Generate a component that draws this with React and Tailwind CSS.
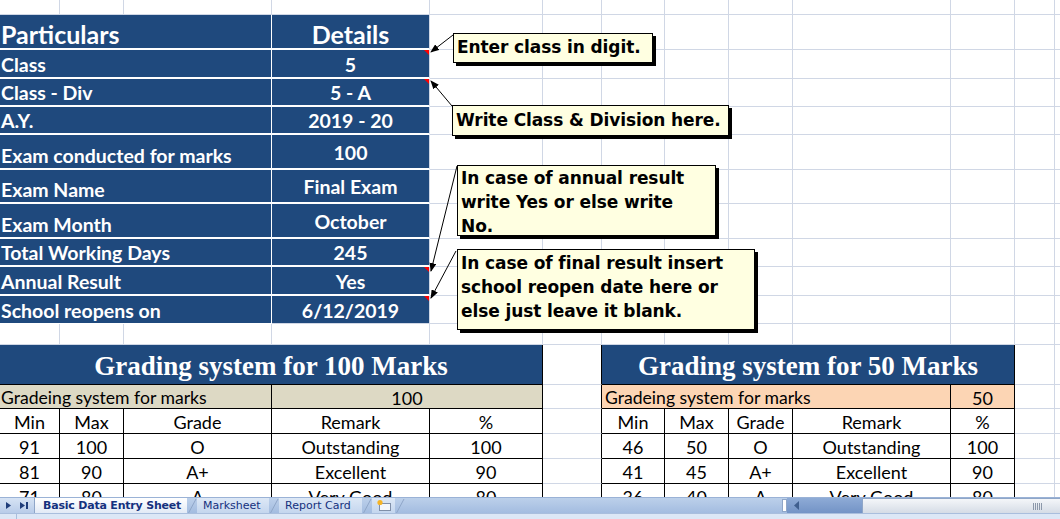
import React from 'react';

const COLS = 'grid-cols-[60px_64px_148px_158px_113px_59px_63px_64px_64px_158px_64px_40px_80px]';
const ROWS =
  'grid-rows-[15px_35px_29px_28px_28px_35px_34px_35px_28px_29px_28px_21px_40px_24px_25px_25px_25px_25px]';

const GRID = 'border-r border-b border-[#D0D7E5]';
const BLK = 'border-r border-b border-black';
const CAL = "font-['Lato',sans-serif]";
const TAH = "font-['DejaVu_Sans',sans-serif]";

const basics = [
  { label: 'Class', value: '5', note: true },
  { label: 'Class - Div', value: '5 - A', note: true },
  { label: 'A.Y.', value: '2019 - 20' },
  { label: 'Exam conducted for marks', value: '100' },
  { label: 'Exam Name', value: 'Final Exam' },
  { label: 'Exam Month', value: 'October' },
  { label: 'Total Working Days', value: '245' },
  { label: 'Annual Result', value: 'Yes', note: true },
  { label: 'School reopens on', value: '6/12/2019', note: true },
];

const grades100 = [
  ['91', '100', 'O', 'Outstanding', '100'],
  ['81', '90', 'A+', 'Excellent', '90'],
  ['71', '80', 'A', 'Very Good', '80'],
];
const grades50 = [
  ['46', '50', 'O', 'Outstanding', '100'],
  ['41', '45', 'A+', 'Excellent', '90'],
  ['36', '40', 'A', 'Very Good', '80'],
];

function blanks(n, key, cls = GRID) {
  return Array.from({ length: n }, (_, i) => <div key={key + i} className={cls} />);
}

function Num({ children }) {
  return (
    <div className={`${BLK} flex items-center justify-center text-[18px] leading-none pt-[2px] text-black`}>
      {children}
    </div>
  );
}

function Note({ className, children }) {
  return (
    <div
      className={`absolute bg-[#FFFFE1] border border-black shadow-[3px_3px_0_#000] ${TAH} font-bold text-[17px] leading-[24px] tracking-[-0.1px] text-black pl-[3px] ${className}`}
    >
      {children}
    </div>
  );
}

function Slash() {
  return (
    <svg width="10" height="16" className="shrink-0">
      <line x1="1" y1="16" x2="9" y2="1" stroke="#8FA6C8" strokeWidth="1" />
    </svg>
  );
}

export default function App() {
  return (
    <div className="w-[1060px] h-[519px] overflow-hidden bg-white flex flex-col">
      {/* sheet */}
      <div className="relative h-[497px] overflow-hidden shrink-0">
        <div className={`grid ${COLS} ${ROWS} ${CAL}`}>
          {blanks(13, 'r1-')}

          {/* basic data header */}
          <div className="col-span-3 bg-[#1F497D] border-r border-b-2 border-white flex items-end pb-[1px] pl-px text-white font-bold text-[25px] leading-none">
            Particulars
          </div>
          <div className="bg-[#1F497D] border-r border-b-2 border-r-[#D0D7E5] border-b-white flex items-end justify-center pb-[1px] text-white font-bold text-[25px] leading-none">
            Details
          </div>
          {blanks(9, 'r2-')}

          {basics.map((row, i) => (
            <React.Fragment key={row.label}>
              <div
                className={`col-span-3 bg-[#1F497D] border-r ${
                  i === basics.length - 1 ? 'border-b' : 'border-b-2'
                } border-white flex items-end pb-[3px] pl-px text-white font-bold text-[19.5px] leading-none`}
              >
                {row.label}
              </div>
              <div
                className={`relative bg-[#1F497D] border-r border-r-[#D0D7E5] ${
                  i === basics.length - 1 ? 'border-b border-b-[#D0D7E5]' : 'border-b-2 border-b-white'
                } flex items-center justify-center pt-[2px] text-white font-bold text-[19.5px] leading-none`}
              >
                {row.value}
                {row.note && (
                  <span className="absolute top-0 right-0 w-0 h-0 border-t-[5px] border-l-[5px] border-t-[#FF0000] border-l-transparent" />
                )}
              </div>
              {blanks(9, `b${i}-`)}
            </React.Fragment>
          ))}

          {blanks(13, 'r12-')}

          {/* grading headers */}
          <div className={`col-span-5 ${BLK} bg-[#1F497D] flex items-center justify-center pt-[3px] text-white font-bold text-[27px] leading-none font-['Liberation_Serif',serif]`}>
            Grading system for 100 Marks
          </div>
          <div className="border-r border-r-black border-b border-b-[#D0D7E5]" />
          <div className={`col-span-5 ${BLK} bg-[#1F497D] flex items-center justify-center pt-[3px] text-white font-bold text-[27px] leading-none font-['Liberation_Serif',serif]`}>
            Grading system for 50 Marks
          </div>
          {blanks(2, 'r13-')}

          {/* marks rows */}
          <div className={`col-span-3 ${BLK} bg-[#DDD9C4] flex items-center pl-px text-[17.6px] leading-none pt-[2px]`}>
            Gradeing system for marks
          </div>
          <div className={`col-span-2 ${BLK} bg-[#DDD9C4] flex items-center justify-center text-[18px] leading-none pt-[2px]`}>
            100
          </div>
          <div className="border-r border-r-black border-b border-b-[#D0D7E5]" />
          <div className={`col-span-4 ${BLK} bg-[#FCD5B4] flex items-center pl-[3px] text-[17.6px] leading-none pt-[2px]`}>
            Gradeing system for marks
          </div>
          <div className={`${BLK} bg-[#FCD5B4] flex items-center justify-center text-[18px] leading-none pt-[2px]`}>
            50
          </div>
          {blanks(2, 'r14-')}

          {['Min', 'Max', 'Grade', 'Remark', '%'].map((h) => (
            <Num key={'a' + h}>{h}</Num>
          ))}
          <div className="border-r border-r-black border-b border-b-[#D0D7E5]" />
          {['Min', 'Max', 'Grade', 'Remark', '%'].map((h) => (
            <Num key={'b' + h}>{h}</Num>
          ))}
          {blanks(2, 'r15-')}

          {grades100.map((g, i) => (
            <React.Fragment key={'g' + i}>
              {g.map((v, j) => (
                <Num key={j}>{v}</Num>
              ))}
              <div className="border-r border-r-black border-b border-b-[#D0D7E5]" />
              {grades50[i].map((v, j) => (
                <Num key={'h' + j}>{v}</Num>
              ))}
              {blanks(2, `g${i}-`)}
            </React.Fragment>
          ))}
        </div>

        {/* comment arrows */}
        <svg className="absolute inset-0 pointer-events-none" width="1060" height="497">
          <defs>
            <marker id="ah" markerWidth="9" markerHeight="7" refX="8" refY="3.5" orient="auto" markerUnits="userSpaceOnUse">
              <path d="M0,0 L9,3.5 L0,7 z" fill="#000" />
            </marker>
          </defs>
          <line x1="453" y1="35" x2="431" y2="52" stroke="#000" markerEnd="url(#ah)" />
          <line x1="452" y1="106" x2="431" y2="81" stroke="#000" markerEnd="url(#ah)" />
          <line x1="457" y1="166" x2="431" y2="271" stroke="#000" markerEnd="url(#ah)" />
          <line x1="456" y1="251" x2="431" y2="298" stroke="#000" markerEnd="url(#ah)" />
        </svg>

        <Note className="left-[453px] top-[33px] w-[200px] h-[30px] pt-[1px]">Enter class in digit.</Note>
        <Note className="left-[452px] top-[105px] w-[277px] h-[31px] pt-[2px]">Write Class &amp; Division here.</Note>
        <Note className="left-[457px] top-[165px] w-[259px] h-[71px]">
          In case of annual result
          <br />
          write Yes or else write
          <br />
          No.
        </Note>
        <Note className="left-[457px] top-[249px] w-[298px] h-[81px] pt-px">
          In case of final result insert
          <br />
          school reopen date here or
          <br />
          else just leave it blank.
        </Note>
      </div>

      {/* sheet tabs and scroll bar */}
      <div className={`h-[16px] flex shrink-0 bg-gradient-to-b from-[#BCD0EA] to-[#A3BCE0] border-t border-[#9AB2D6] ${TAH} text-[11px] text-[#15317E]`}>
        <div className="w-[35px] shrink-0 flex items-center gap-[9px] pl-[6px] bg-gradient-to-b from-[#D6E3F4] to-[#B8CCE9] border-r border-[#8FA6C8]">
          <svg width="5" height="7">
            <path d="M0,0 L5,3.5 L0,7 z" fill="#1F3D7A" />
          </svg>
          <svg width="8" height="7">
            <path d="M0,0 L5,3.5 L0,7 z M6,0 H8 V7 H6 z" fill="#1F3D7A" />
          </svg>
        </div>
        <div className="w-[152px] shrink-0 bg-gradient-to-b from-white to-[#E2EAF6] font-bold tracking-[-0.2px] pl-[8px] flex items-center leading-none">
          Basic Data Entry Sheet
        </div>
        <Slash />
        <div className="w-[72px] shrink-0 bg-gradient-to-b from-[#DDE8F6] to-[#C4D6EE] pl-[6px] flex items-center leading-none">
          Marksheet
        </div>
        <Slash />
        <div className="w-[83px] shrink-0 bg-gradient-to-b from-[#DDE8F6] to-[#C4D6EE] pl-[6px] flex items-center leading-none">
          Report Card
        </div>
        <Slash />
        <div className="w-[23px] shrink-0 bg-gradient-to-b from-[#DDE8F6] to-[#C4D6EE] flex items-center justify-center">
          <svg width="16" height="13">
            <rect x="3.5" y="4.5" width="11" height="7" fill="#F4F7FC" stroke="#7F8FA8" />
            <circle cx="4" cy="3.5" r="2.6" fill="#F6B426" />
          </svg>
        </div>
        <Slash />
        <div className="flex-1" />
        <div className="w-[5px] shrink-0 my-[1px] bg-white border border-[#8FA6C8]" />
        <div className="w-[75px] shrink-0 bg-gradient-to-b from-[#8EABD6] to-[#7393C6] flex items-center pl-[7px]">
          <svg width="5" height="9">
            <path d="M5,0 L0,4.5 L5,9 z" fill="#3F5F8F" />
          </svg>
        </div>
        <div className="w-[198px] shrink-0 bg-gradient-to-b from-[#F4F6F9] to-[#D5DCE6] border-l border-t border-[#8FA6C8] flex items-center justify-end pr-[18px]">
          <svg width="9" height="7">
            <path d="M0.5,0 V7 M2.5,0 V7 M4.5,0 V7 M6.5,0 V7 M8.5,0 V7" stroke="#8C98AA" strokeWidth="1" />
          </svg>
        </div>
      </div>
      <div className="flex-1 bg-[#DCE7F6] border-t border-[#A9BEDD] flex">
        <div className="w-[17px] border-r border-[#A9BEDD]" />
      </div>
    </div>
  );
}
